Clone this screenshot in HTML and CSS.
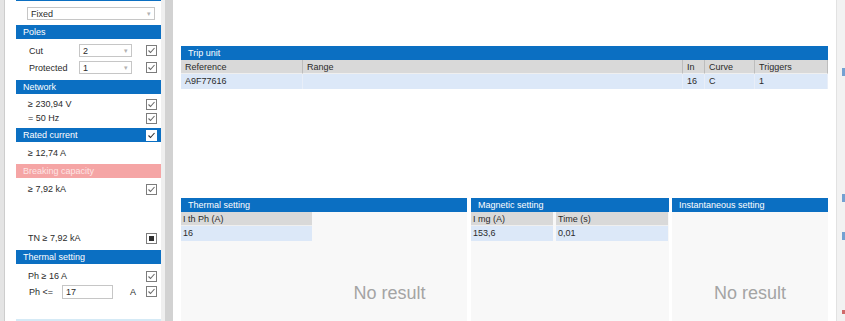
FILE: index.html
```html
<!DOCTYPE html>
<html lang="en">
<head>
    <meta charset="UTF-8">
    <title>Protection settings</title>
    <link rel="stylesheet" href="styles.css">
</head>
<body>
    <div class="app">
        <!-- Criteria panel -->
        <aside class="side">
            <div class="topline"></div>
            <div class="select wide"><span>Fixed</span><span class="arrow">&#9662;</span></div>

            <div class="sec-head">Poles</div>
            <div class="sec-body poles">
                <div class="row">
                    <span class="lbl">Cut</span>
                    <div class="select small"><span>2</span><span class="arrow">&#9662;</span></div>
                    <span class="check"><svg viewBox="0 0 11 11"><rect x="0.5" y="0.5" width="10" height="10"/><polyline points="2.5,5.5 4.5,7.5 8.5,3"/></svg></span>
                </div>
                <div class="row">
                    <span class="lbl">Protected</span>
                    <div class="select small"><span>1</span><span class="arrow">&#9662;</span></div>
                    <span class="check"><svg viewBox="0 0 11 11"><rect x="0.5" y="0.5" width="10" height="10"/><polyline points="2.5,5.5 4.5,7.5 8.5,3"/></svg></span>
                </div>
            </div>

            <div class="sec-head">Network</div>
            <div class="sec-body network">
                <div class="row line">
                    <span>&ge; 230,94 V</span>
                    <span class="check"><svg viewBox="0 0 11 11"><rect x="0.5" y="0.5" width="10" height="10"/><polyline points="2.5,5.5 4.5,7.5 8.5,3"/></svg></span>
                </div>
                <div class="row line">
                    <span>= 50 Hz</span>
                    <span class="check"><svg viewBox="0 0 11 11"><rect x="0.5" y="0.5" width="10" height="10"/><polyline points="2.5,5.5 4.5,7.5 8.5,3"/></svg></span>
                </div>
            </div>

            <div class="sec-head">
                <span>Rated current</span>
                <span class="check on-blue"><svg viewBox="0 0 11 11"><rect x="0.5" y="0.5" width="10" height="10"/><polyline points="2.5,5.5 4.5,7.5 8.5,3"/></svg></span>
            </div>
            <div class="sec-body rated">
                <div class="row line"><span>&ge; 12,74 A</span></div>
            </div>

            <div class="sec-head alert">Breaking capacity</div>
            <div class="sec-body breaking">
                <div class="row line">
                    <span>&ge; 7,92 kA</span>
                    <span class="check"><svg viewBox="0 0 11 11"><rect x="0.5" y="0.5" width="10" height="10"/><polyline points="2.5,5.5 4.5,7.5 8.5,3"/></svg></span>
                </div>
                <div class="spacer"></div>
                <div class="row line">
                    <span>TN &ge; 7,92 kA</span>
                    <span class="check mixed"><svg viewBox="0 0 11 11"><rect x="0.5" y="0.5" width="10" height="10"/><rect class="fill" x="3" y="3" width="5" height="5"/></svg></span>
                </div>
            </div>

            <div class="sec-head">Thermal setting</div>
            <div class="sec-body thermal">
                <div class="row line">
                    <span>Ph &ge; 16 A</span>
                    <span class="check"><svg viewBox="0 0 11 11"><rect x="0.5" y="0.5" width="10" height="10"/><polyline points="2.5,5.5 4.5,7.5 8.5,3"/></svg></span>
                </div>
                <div class="row input-row">
                    <span class="lbl-short">Ph &lt;=</span>
                    <span class="field">17</span>
                    <span class="unit">A</span>
                    <span class="check"><svg viewBox="0 0 11 11"><rect x="0.5" y="0.5" width="10" height="10"/><polyline points="2.5,5.5 4.5,7.5 8.5,3"/></svg></span>
                </div>
            </div>
            <div class="bottomline"></div>
        </aside>

        <div class="splitter"></div>

        <!-- Results -->
        <main class="main">
            <div class="grid trip">
                <div class="title">Trip unit</div>
                <div class="th">Reference</div>
                <div class="th">Range</div>
                <div class="th">In</div>
                <div class="th">Curve</div>
                <div class="th">Triggers</div>
                <div class="td">A9F77616</div>
                <div class="td"></div>
                <div class="td">16</div>
                <div class="td">C</div>
                <div class="td">1</div>
            </div>

            <div class="panels">
                <section class="panel p-thermal">
                    <div class="title">Thermal setting</div>
                    <div class="panel-body">
                        <div class="cols">
                            <div class="col c-ith">
                                <div class="th">I th Ph (A)</div>
                                <div class="td">16</div>
                            </div>
                        </div>
                        <div class="empty">No result</div>
                    </div>
                </section>
                <section class="panel p-magnetic">
                    <div class="title">Magnetic setting</div>
                    <div class="panel-body">
                        <div class="cols">
                            <div class="col c-img">
                                <div class="th">I mg (A)</div>
                                <div class="td">153,6</div>
                            </div>
                            <div class="col c-time">
                                <div class="th">Time (s)</div>
                                <div class="td">0,01</div>
                            </div>
                        </div>
                    </div>
                </section>
                <section class="panel p-instant">
                    <div class="title">Instantaneous setting</div>
                    <div class="panel-body">
                        <div class="empty">No result</div>
                    </div>
                </section>
            </div>
        </main>

        <div class="edge">
            <span class="mark m1"></span>
            <span class="mark m2"></span>
            <span class="mark m3"></span>
            <span class="mark red"></span>
        </div>
    </div>
</body>
</html>
```

FILE: styles.css
```css
body {
    margin: 0;
    background-color: #e4e4e4;
    color: #2b2b2b;
    font-family: "Liberation Sans", Arial, sans-serif;
    font-size: 9px;
}
.app {
    display: flex;
    height: 321px;
    overflow: hidden;
}

/* left criteria panel */
.side {
    width: 157px;
    margin-left: 4px;
    padding-left: 11px;
    box-sizing: border-box;
    background-color: #fff;
    border-left: 1px solid #cdcdcd;
}
.topline {
    height: 1px;
    background-color: #0b6fc2;
}
.select {
    display: flex;
    align-items: center;
    height: 13px;
    box-sizing: border-box;
    border: 1px solid #c6c6c6;
    background-color: #fff;
    padding-left: 3px;
}
.select .arrow {
    margin-left: auto;
    margin-right: 3px;
    color: #b3b3b3;
    font-size: 7px;
}
.select.wide {
    width: 128px;
    margin: 6px 0 5px 11px;
}
.select.small {
    width: 53px;
}
.sec-head {
    display: flex;
    align-items: center;
    height: 14px;
    padding-left: 7px;
    background-color: #0b6fc2;
    color: #fff;
}
.sec-head.alert {
    background-color: #f5a5a5;
    color: #fde4e4;
}
.sec-body {
    padding-top: 3px;
    padding-bottom: 3px;
}
.sec-body.poles {
    padding-bottom: 4px;
}
.sec-body.rated {
    padding-top: 4px;
    padding-bottom: 4px;
}
.sec-body.breaking {
    padding-top: 4px;
    padding-bottom: 5px;
}
.sec-body.thermal {
    padding-top: 5px;
}
.spacer {
    height: 35px;
}
.row {
    display: flex;
    align-items: center;
    height: 17px;
    padding-left: 13px;
}
.row.line {
    height: 14px;
    padding-left: 12px;
}
.lbl {
    width: 50px;
}
.lbl-short {
    width: 33px;
}
.field {
    display: flex;
    align-items: center;
    width: 51px;
    height: 14px;
    box-sizing: border-box;
    border: 1px solid #c6c6c6;
    padding-left: 3px;
}
.unit {
    margin-left: 17px;
}
.check {
    margin-left: auto;
    margin-right: 4px;
    width: 11px;
    height: 11px;
}
.check svg {
    display: block;
    width: 11px;
    height: 11px;
}
.check rect {
    fill: #fff;
    stroke: #7c7c7c;
}
.check polyline {
    fill: none;
    stroke: #6a6a6a;
    stroke-width: 1.1;
}
.check.on-blue rect {
    stroke: #fff;
}
.check.on-blue polyline {
    stroke: #333;
}
.check.mixed .fill {
    fill: #2f2f2f;
    stroke: none;
}
.bottomline {
    margin-top: 16px;
    height: 2px;
    background-color: #d5eaf6;
}

.splitter {
    width: 12px;
    box-sizing: border-box;
    border-left: 4px solid #efefef;
    background-color: #d2d2d2;
}

/* results area */
.main {
    width: 663px;
    box-sizing: border-box;
    padding: 46px 8px 0;
    background-color: #fff;
}
.title {
    height: 14px;
    line-height: 14px;
    padding-left: 7px;
    background-color: #0b6fc2;
    color: #fff;
}
.th {
    height: 14px;
    line-height: 14px;
    padding-left: 4px;
    background-color: #d9d9d9;
    border-right: 1px solid #bdbdbd;
    border-bottom: 1px solid #efefef;
    box-sizing: border-box;
    white-space: nowrap;
}
.td {
    height: 15px;
    line-height: 15px;
    padding-left: 4px;
    background-color: #dce8f8;
    border-right: 1px solid #e8eef8;
    box-sizing: border-box;
}
.grid.trip {
    display: grid;
    grid-template-columns: 122px 380px 22px 50px 1fr;
}
.grid.trip .title {
    grid-column: 1 / -1;
}
.grid.trip .th:last-of-type {
    border-right: none;
}

.panels {
    display: flex;
    margin-top: 109px;
}
.panel {
    display: flex;
    flex-direction: column;
}
.p-thermal {
    width: 286px;
}
.p-magnetic {
    width: 198px;
    margin-left: 4px;
}
.p-instant {
    width: 156px;
    margin-left: 3px;
}
.panel-body {
    display: flex;
    height: 120px;
    background-color: #f8f8f8;
}
.panel .th {
    padding-left: 2px;
    border-right: none;
}
.panel .td {
    padding-left: 2px;
    border-right: none;
}
.cols {
    display: flex;
    gap: 3px;
    align-self: flex-start;
}
.c-ith {
    width: 131px;
}
.c-img {
    width: 82px;
}
.c-time {
    width: 112px;
}
.empty {
    flex: 1;
    padding-top: 71px;
    text-align: center;
    font-size: 18px;
    color: #a4a4a4;
}

.edge {
    flex: 1;
    display: flex;
    flex-direction: column;
    align-items: flex-end;
    background-color: #f2f2f2;
    border-left: 1px solid #e2e2e2;
}
.mark {
    width: 3px;
    height: 8px;
    background-color: #3d7fc4;
    opacity: 0.7;
}
.m1 {
    margin-top: 68px;
}
.m2 {
    margin-top: 118px;
}
.m3 {
    margin-top: 30px;
}
.mark.red {
    margin-top: 70px;
    height: 4px;
    background-color: #c03030;
}
```
